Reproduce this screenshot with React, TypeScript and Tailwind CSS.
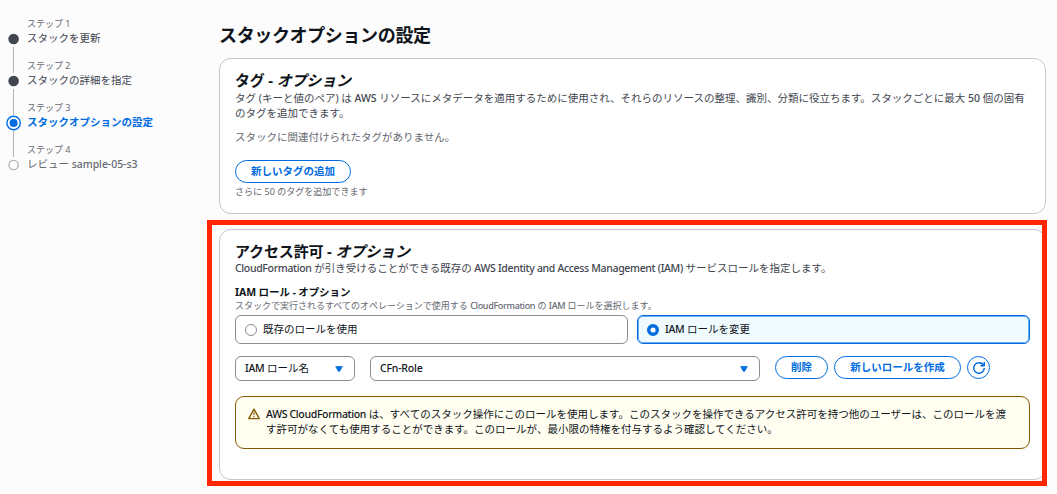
import type { ReactNode } from "react";

const L = ({ children }: { children: ReactNode }) => (
  <span className="font-medium tracking-[-0.33px]">{children}</span>
);

type StepState = "done" | "current" | "todo";

const steps: { label: string; title: ReactNode; state: StepState }[] = [
  { label: "ステップ 1", title: "スタックを更新", state: "done" },
  { label: "ステップ 2", title: "スタックの詳細を指定", state: "done" },
  { label: "ステップ 3", title: "スタックオプションの設定", state: "current" },
  { label: "ステップ 4", title: <>レビュー <span className="font-medium tracking-[-0.05px]">sample-05-s3</span></>, state: "todo" },
];

const titleStyle: Record<StepState, string> = {
  done: "text-[#424650]",
  current: "font-bold text-[#006ce0]",
  todo: "text-[#656871]",
};

function StepDot({ state }: { state: StepState }) {
  return (
    <svg width="16" height="16" viewBox="0.4 0 16 16" className="shrink-0">
      {state === "done" && <circle cx="8" cy="8" r="5.3" fill="#424650" />}
      {state === "current" && (
        <>
          <circle cx="8" cy="8" r="6.7" fill="#fff" stroke="#006ce0" strokeWidth="1.4" />
          <circle cx="8" cy="8" r="4" fill="#006ce0" />
        </>
      )}
      {state === "todo" && <circle cx="8" cy="8" r="4.6" fill="#fff" stroke="#b4b4bb" strokeWidth="1.4" />}
    </svg>
  );
}

function Steps() {
  return (
    <nav className="w-[219px] shrink-0 pl-[5px] pt-[16px]">
      {steps.map((s, i) => (
        <div key={s.label} className="flex h-[42px] gap-[5px]">
          <div className="flex w-[17px] flex-col items-center pt-[15px]">
            <StepDot state={s.state} />
            {i < steps.length - 1 && <div className="-mb-[15px] w-px flex-1 bg-[#b4b4bb]" />}
          </div>
          <div className="whitespace-nowrap">
            <div className="h-[14px] text-[9px] leading-[16px] text-[#656871]">{s.label}</div>
            <div className={`text-[10.5px] leading-[16px] ${titleStyle[s.state]}`}>{s.title}</div>
          </div>
        </div>
      ))}
    </nav>
  );
}

function Pill({ children, className }: { children: ReactNode; className: string }) {
  return (
    <button
      className={`flex h-[23px] shrink-0 items-center justify-center whitespace-nowrap rounded-full border border-[#006ce0] bg-white pb-px text-[10.5px] font-bold leading-[15px] text-[#006ce0] ${className}`}
    >
      {children}
    </button>
  );
}

function Select({ children, className }: { children: ReactNode; className: string }) {
  return (
    <div
      className={`flex h-[25px] items-center justify-between rounded-[6px] border border-[#8c8c94] bg-white pl-[9px] pr-[11px] text-[10.5px] leading-[15px] text-[#0f141a] ${className}`}
    >
      <span>{children}</span>
      <svg width="8" height="6" viewBox="0 0 8 6">
        <path d="M.7.5h6.6L4.7 5.3H3.3Z" fill="#006ce0" stroke="#006ce0" strokeWidth=".7" strokeLinejoin="round" />
      </svg>
    </div>
  );
}

export default function App() {
  return (
    <div className="relative flex h-[494px] w-[1057px] overflow-hidden bg-[#fcfcfd] font-['Noto_Sans','Noto_Sans_CJK_JP',sans-serif] text-[#424650]">
      <Steps />
      <main className="w-[827px] pt-[23px]">
        <h1 className="h-[35px] text-[18px] font-bold leading-[24px] tracking-[-0.36px] text-[#0f141a]">
          スタックオプションの設定
        </h1>

        <section className="h-[156px] rounded-[12px] border border-[#c6c6cd] bg-white px-[15px] pt-[12px] text-[10.5px] leading-[15px]">
          <h2 className="mb-[2px] text-[15px] font-bold leading-[18px] tracking-[-0.18px] text-[#0f141a]">
            タグ - <em>オプション</em>
          </h2>
          <p className="whitespace-nowrap">
            タグ (キーと値のペア) は <span className="font-medium">AWS</span>{" "}
            リソースにメタデータを適用するために使用され、それらのリソースの整理、識別、分類に役立ちます。スタックごとに最大{" "}
            <span className="font-medium">50</span> 個の固有
            <br />
            のタグを追加できます。
          </p>
          <p className="mb-[15px] mt-[9px] text-[#656871]">スタックに関連付けられたタグがありません。</p>
          <Pill className="w-[116px]">新しいタグの追加</Pill>
          <p className="mt-[3px] text-[9px] leading-[12px] tracking-[0.03px] text-[#656871]">
            さらに 50 のタグを追加できます
          </p>
        </section>

        <section className="mt-[15px] h-[251px] rounded-[12px] border border-[#c6c6cd] bg-white px-[15px] pt-[12px] text-[10.5px] leading-[15px]">
          <h2 className="text-[15px] font-bold leading-[18px] tracking-[-0.15px] text-[#0f141a]">
            アクセス許可 - <em>オプション</em>
          </h2>
          <p className="mt-px whitespace-nowrap">
            <L>CloudFormation</L> が引き受けることができる既存の <L>AWS Identity and Access Management (IAM)</L>{" "}
            サービスロールを指定します。
          </p>
          <h3 className="mt-[9px] font-bold tracking-[-0.1px] text-[#0f141a]">IAM ロール - オプション</h3>
          <p className="text-[9px] leading-[12px] text-[#656871]">
            スタックで実行されるすべてのオペレーションで使用する <L>CloudFormation</L> の <L>IAM</L> ロールを選択します。
          </p>

          <div className="mt-[3px] flex gap-[9px] text-[#0f141a]">
            <div className="flex h-[29px] w-[393px] items-center gap-[6px] rounded-[6px] border border-[#8c8c94] pl-[9px]">
              <span className="mt-px h-[12px] w-[12px] rounded-full border border-[#8c8c94] bg-white" />
              <span className="pb-px">既存のロールを使用</span>
            </div>
            <div className="flex h-[29px] w-[393px] items-center gap-[6px] rounded-[6px] border border-[#006ce0] bg-[#f0fbff] pl-[9px] shadow-[inset_0_0_0_1px_#6faced]">
              <svg width="12" height="12" viewBox="0 0 12 12" className="mt-px">
                <circle cx="6" cy="6" r="4.3" fill="#fff" stroke="#006ce0" strokeWidth="3.4" />
              </svg>
              <span className="pb-px">
                <L>IAM</L> ロールを変更
              </span>
            </div>
          </div>

          <div className="mt-[12px] flex">
            <Select className="w-[120px]">
              <L>IAM</L> ロール名
            </Select>
            <Select className="ml-[15px] w-[390px]">
              <span className="font-medium tracking-[-0.2px]">CFn-Role</span>
            </Select>
            <Pill className="ml-[15px] w-[53px]">削除</Pill>
            <Pill className="ml-[6px] w-[127px]">新しいロールを作成</Pill>
            <Pill className="ml-[6px] w-[23px]">
              <svg width="12" height="12" viewBox="0 0 16 16" fill="none" stroke="#006ce0" strokeWidth="2" className="mt-px">
                <path d="M15 8c0 3.87-3.13 7-7 7s-7-3.13-7-7 3.13-7 7-7c2.79 0 5.2 1.63 6.33 4" />
                <path d="M10 5h5V0" strokeLinejoin="round" />
              </svg>
            </Pill>
          </div>

          <div className="mt-[15px] flex h-[53px] gap-[6px] rounded-[9px] border border-[#855900] bg-[#fffef0] pl-[12px] pt-[10px] text-[#0f141a]">
            <svg width="12" height="12" viewBox="0 0 16 16" fill="none" stroke="#855900" strokeWidth="1.8" className="mt-px shrink-0">
              <path d="M8 1.6 15 14.2H1Z" strokeLinejoin="round" />
              <path d="M8 5.5v4M8 10.7v1.8" strokeWidth="1.5" />
            </svg>
            <p className="whitespace-nowrap">
              <L>AWS CloudFormation</L>{" "}
              は、すべてのスタック操作にこのロールを使用します。このスタックを操作できるアクセス許可を持つ他のユーザーは、このロールを渡
              <br />
              す許可がなくても使用することができます。このロールが、最小限の特権を付与するよう確認してください。
            </p>
          </div>
        </section>
      </main>
      <div className="pointer-events-none absolute left-[207px] top-[220px] h-[266px] w-[840px] border-[5px] border-[#ff2600]" />
    </div>
  );
}
